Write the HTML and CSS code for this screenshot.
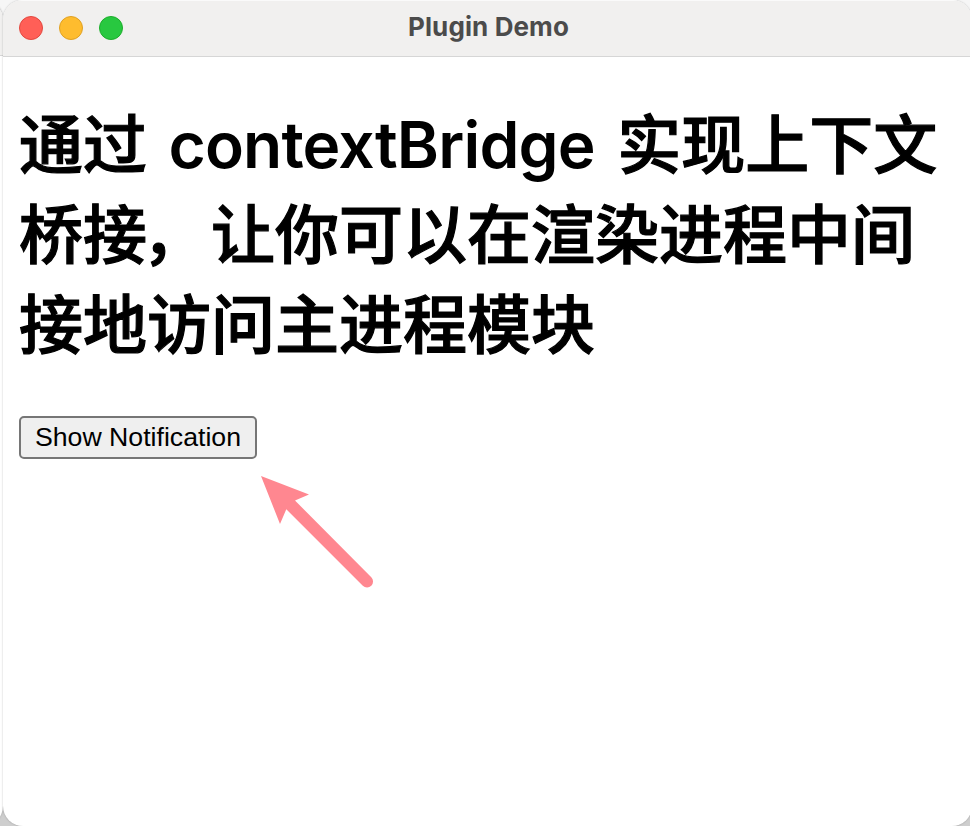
FILE: index.html
```html
<!DOCTYPE html>
<html lang="zh-CN">
<head>
<meta charset="utf-8">
<title>Plugin Demo</title>
<link rel="stylesheet" href="styles.css">
</head>
<body>
<div class="desktop">
  <div class="neighbor"><div class="neighbor-bar"></div></div>
  <div class="window">
    <header class="titlebar">
      <div class="lights">
        <span class="light close"></span>
        <span class="light minimize"></span>
        <span class="light zoom"></span>
      </div>
      <div class="title">Plugin Demo</div>
    </header>
    <main class="content">
      <h1 class="heading">通过 <span class="latin">contextBridge</span> 实现上下文<br>桥接<span class="comma">，</span>让你可以在渲染进程中间<br>接地访问主进程模块</h1>
      <button class="notify">Show Notification</button>
    </main>
  </div>
  <svg class="arrow" width="114" height="114" viewBox="0 0 114 114">
    <path d="M0 0L48 18.6L34 24.5L110.3 101.3A6 6 0 0 1 101.8 109.8L25.3 33.3L19 48Z" fill="#ff8790"/>
  </svg>
</div>
</body>
</html>
```

FILE: styles.css
```css
body {
  margin: 0;
  font-family: "Liberation Sans", "Noto Sans CJK SC", sans-serif;
  color: #000;
}

.desktop {
  position: relative;
  width: 970px;
  height: 826px;
  overflow: hidden;
  background: linear-gradient(#f6f6f6 0, #f6f6f6 30px, #cecece 800px);
}

.neighbor {
  position: absolute;
  left: -57px;
  top: 0;
  width: 60px;
  height: 826px;
  box-sizing: border-box;
  border-radius: 20px;
  background: #fff;
  box-shadow: 0 0 2px #999;
  overflow: hidden;
}

.neighbor-bar {
  height: 55px;
  background: #f1f0ef;
  border-bottom: 1px solid #d6d6d6;
}

.window {
  position: absolute;
  left: 3px;
  top: 0;
  width: 969px;
  height: 826px;
  border-radius: 20px;
  background: #fff;
  box-shadow: 0 0 2px rgba(0, 0, 0, 0.25);
  overflow: hidden;
}

.titlebar {
  display: grid;
  grid-template-columns: 1fr auto 1fr;
  align-items: center;
  height: 57px;
  box-sizing: border-box;
  padding: 0 16px;
  background: #f1f0ef;
  border-top: 1px solid #fafafa;
  border-bottom: 1px solid #d6d6d6;
}

.lights {
  display: flex;
  gap: 16px;
  margin-top: -2px;
}

.light {
  width: 24px;
  height: 24px;
  box-sizing: border-box;
  border-radius: 50%;
}

.close { background: #ff5f57; border: 1px solid #e2483f; }
.minimize { background: #febc2e; border: 1px solid #dfa023; }
.zoom { background: #28c840; border: 1px solid #1dad2b; }

.title {
  color: #4b4b4b;
  font: 700 26px/32px Inter, sans-serif;
  letter-spacing: 0.1px;
  margin: -3px 0 0 2px;
}

.content {
  padding: 38px 16px 0;
}

.heading {
  margin: 0 0 51px;
  font: 500 64px/90px "Noto Sans CJK SC", sans-serif;
  -webkit-text-stroke: 1.2px #000;
  white-space: nowrap;
}

.latin {
  margin: 0 8px 0 7px;
  font-family: Inter, sans-serif;
  font-weight: 600;
  line-height: 1;
  letter-spacing: -0.8px;
  -webkit-text-stroke: 0;
}

.comma {
  margin: 0 5px 0 -5px;
}

.notify {
  display: block;
  width: 238px;
  height: 43px;
  padding: 0 0 2px;
  border: 2px solid #767676;
  border-radius: 5px;
  background: #efefef;
  color: #000;
  font: 26.67px/30px "Liberation Sans", sans-serif;
  white-space: nowrap;
}

.arrow {
  position: absolute;
  left: 261px;
  top: 476px;
}
```
